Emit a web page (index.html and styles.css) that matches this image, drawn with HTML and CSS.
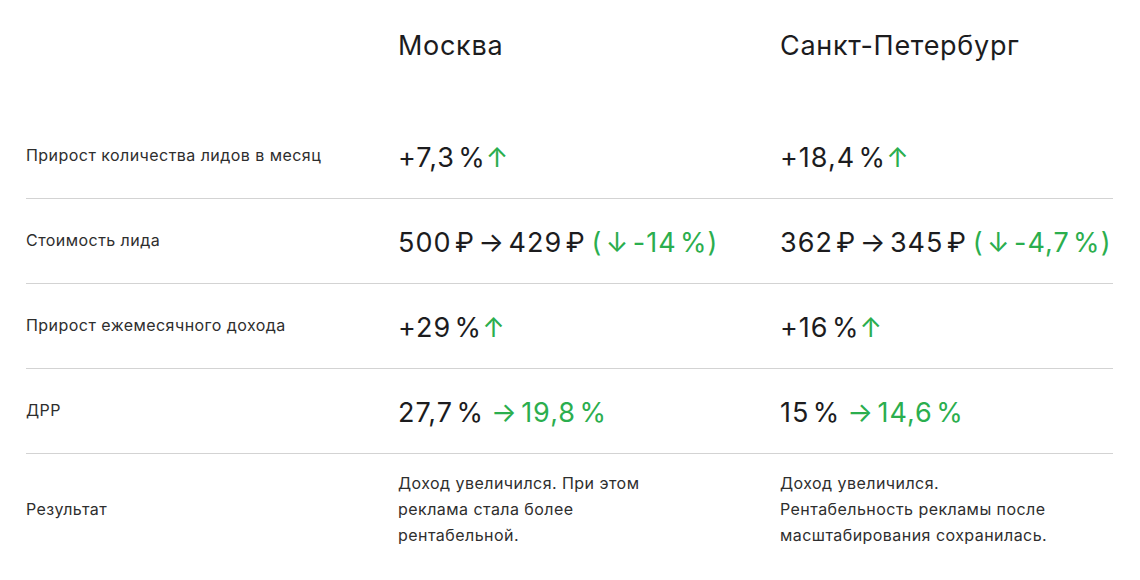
FILE: index.html
```html
<!DOCTYPE html>
<html lang="ru">
<head>
<meta charset="utf-8">
<link rel="stylesheet" href="styles.css">
</head>
<body>
<div class="table">
  <div class="head">
    <div class="cell"></div>
    <div class="cell city">Москва</div>
    <div class="cell city">Санкт-Петербург</div>
  </div>
  <div class="row">
    <div class="label">Прирост количества лидов в месяц</div>
    <div class="value">+7,3&#8202;%<span class="g">↑</span></div>
    <div class="value">+18,4&#8202;%<span class="g">↑</span></div>
  </div>
  <div class="row line">
    <div class="label">Стоимость лида</div>
    <div class="value">500&#8202;₽&#8202;→&#8202;429&#8202;₽&#8201;<span class="g">(&#8202;↓&#8202;-14&#8202;%)</span></div>
    <div class="value">362&#8202;₽&#8202;→&#8202;345&#8202;₽&#8201;<span class="g">(&#8202;↓&#8202;-4,7&#8202;%)</span></div>
  </div>
  <div class="row line">
    <div class="label">Прирост ежемесячного дохода</div>
    <div class="value">+29&#8202;%<span class="g">↑</span></div>
    <div class="value">+16&#8202;%<span class="g">↑</span></div>
  </div>
  <div class="row line">
    <div class="label">ДРР</div>
    <div class="value">27,7&#8202;%&#8202;<span class="g">&#8202;→&#8202;19,8&#8202;%</span></div>
    <div class="value">15&#8202;%&#8202;<span class="g">&#8202;→&#8202;14,6&#8202;%</span></div>
  </div>
  <div class="row line result">
    <div class="label">Результат</div>
    <div class="text">Доход увеличился. При этом<br>реклама стала более<br>рентабельной.</div>
    <div class="text">Доход увеличился.<br>Рентабельность рекламы после<br>масштабирования сохранилась.</div>
  </div>
</div>
</body>
</html>
```
FILE: styles.css
```css
html, body {
  margin: 0;
  padding: 0;
  background: #ffffff;
}
body {
  font-family: Inter, "Noto Sans", sans-serif;
  color: #1c1c1e;
}
.table {
  margin: 0 27px 0 26px;
}
.head, .row {
  display: grid;
  grid-template-columns: 372px 382px 1fr;
  align-items: center;
}
.head {
  height: 113px;
  align-items: start;
}
.city {
  padding-top: 28px;
  font-size: 27px;
  line-height: 36px;
  letter-spacing: 0.7px;
}
.row {
  height: 85px;
  box-sizing: border-box;
}
.line {
  border-top: 1px solid #d3d3d3;
}
.label {
  font-size: 16px;
  line-height: 22px;
  color: #2e2e2e;
  letter-spacing: 0.45px;
  padding-bottom: 2px;
}
.value {
  font-size: 27px;
  line-height: 36px;
  letter-spacing: 1px;
  padding-top: 4px;
}
.g {
  color: #2bae4e;
}
.result {
  height: auto;
  padding: 16px 0 18px;
}
.result .label {
  padding-bottom: 0;
}
.text {
  font-size: 16px;
  line-height: 26px;
  color: #2e2e2e;
  letter-spacing: 0.45px;
}
```
